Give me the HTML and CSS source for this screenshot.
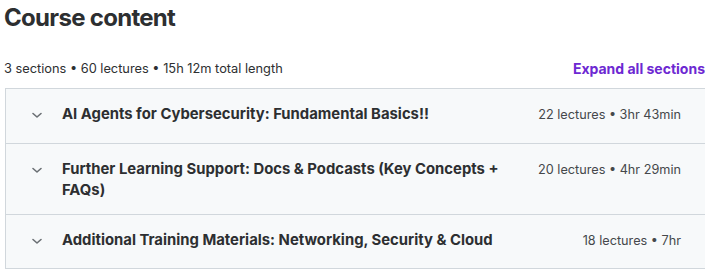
FILE: index.html
```html
<!DOCTYPE html>
<html lang="en">
<head>
<meta charset="utf-8">
<link rel="stylesheet" href="styles.css">
</head>
<body>
<div class="page">
  <h2 class="title">Course content</h2>
  <div class="meta-row">
    <span class="meta">3 sections • 60 lectures • 15h 12m total length</span>
    <button class="expand">Expand all sections</button>
  </div>
  <div class="sections">
    <div class="section">
      <svg class="chev" viewBox="0 0 16 16" width="16" height="16"><path d="M4 6.5l4 3.5 4-3.5" fill="none" stroke="currentColor" stroke-width="1.6" stroke-linecap="round" stroke-linejoin="round"/></svg>
      <span class="sec-title">AI Agents for Cybersecurity: Fundamental Basics!!</span>
      <span class="sec-meta">22 lectures • 3hr 43min</span>
    </div>
    <div class="section tall">
      <svg class="chev" viewBox="0 0 16 16" width="16" height="16"><path d="M4 6.5l4 3.5 4-3.5" fill="none" stroke="currentColor" stroke-width="1.6" stroke-linecap="round" stroke-linejoin="round"/></svg>
      <span class="sec-title">Further Learning Support: Docs &amp; Podcasts (Key Concepts + FAQs)</span>
      <span class="sec-meta">20 lectures • 4hr 29min</span>
    </div>
    <div class="section last">
      <svg class="chev" viewBox="0 0 16 16" width="16" height="16"><path d="M4 6.5l4 3.5 4-3.5" fill="none" stroke="currentColor" stroke-width="1.6" stroke-linecap="round" stroke-linejoin="round"/></svg>
      <span class="sec-title">Additional Training Materials: Networking, Security &amp; Cloud</span>
      <span class="sec-meta">18 lectures • 7hr</span>
    </div>
  </div>
</div>
</body>
</html>
```

FILE: styles.css
```css
* { box-sizing: border-box; }
html, body { margin: 0; padding: 0; background: #fff; }
body {
  font-family: Inter, "Noto Sans", sans-serif;
  color: #2d2f31;
}
.page {
  width: 705px;
  padding: 0 0 0 4px;
}
.title {
  margin: 0;
  padding-top: 3px;
  font-size: 24px;
  line-height: 30px;
  font-weight: 700;
  letter-spacing: -0.7px;
  color: #2d2f31;
}
.meta-row {
  display: flex;
  justify-content: space-between;
  align-items: center;
  margin-top: 25px;
  height: 20px;
}
.meta {
  font-size: 12.8px;
  color: #2d2f31;
}
.expand {
  border: 0;
  background: none;
  padding: 0;
  font-family: inherit;
  font-size: 14px;
  font-weight: 700;
  color: #6d28d2;
  cursor: pointer;
}
.sections {
  margin-top: 10px;
  margin-left: 1px;
  border: 1px solid #d1d7dc;
  border-right: 0;
}
.section {
  display: flex;
  align-items: flex-start;
  background: #f7f9fa;
  border-bottom: 1px solid #d1d7dc;
  padding: 15px 24px 0 23px;
  min-height: 55px;
}
.section.tall { min-height: 71px; }
.section.last { border-bottom: 0; min-height: 53px; }
.chev {
  color: #6a6f73;
  flex: none;
  margin-top: 3px;
  margin-right: 17px;
}
.sec-title {
  flex: 1;
  font-size: 14.85px;
  font-weight: 700;
  line-height: 21px;
  padding-right: 24px;
}
.sec-meta {
  flex: none;
  font-size: 12.7px;
  line-height: 21px;
  color: #45484b;
}
```
